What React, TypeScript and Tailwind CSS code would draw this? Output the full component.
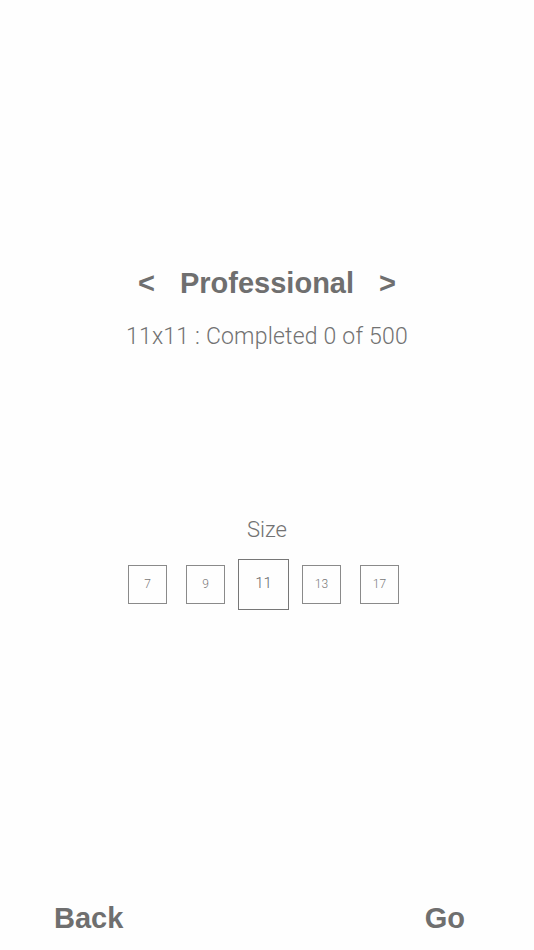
const sizes = [7, 9, 11, 13, 17];

const App = () => {
   const current = 11;

   return (
      <div className="flex h-[950px] w-full flex-col bg-[#fefefe] text-[#6f6f6f]" style={{ fontFamily: '"Liberation Sans", Arial, sans-serif' }}>
         {/* Level selector */}
         <div className="mt-[266px] flex items-center justify-center gap-[25px] text-[29px] font-bold leading-[34px]">
            <span>&lt;</span>
            <span>Professional</span>
            <span>&gt;</span>
         </div>
         <p className="mt-[23px] text-center text-[23px] font-light leading-[28px] tracking-[0.2px] text-[#727272]" style={{ fontFamily: 'Roboto, sans-serif' }}>
            11x11 : Completed 0 of 500
         </p>

         {/* Size picker */}
         <p className="mt-[165px] text-center text-[22px] font-light leading-[28px] text-[#727272]" style={{ fontFamily: 'Roboto, sans-serif' }}>
            Size
         </p>
         <div className="mt-[15px] flex items-center justify-center pr-[7px]" style={{ fontFamily: 'Roboto, sans-serif' }}>
            {sizes.map((s) => (
               <div key={s} className="flex w-[58px] justify-center">
                  {s === current ? (
                     <div className="flex h-[51px] w-[51px] items-center justify-center border-[1.5px] border-[#777] pb-[3px] text-[15px] font-light text-[#666]">
                        {s}
                     </div>
                  ) : (
                     <div className="flex h-[39px] w-[39px] items-center justify-center border border-[#8a8a8a] pb-[2px] text-[12px] font-light text-[#777]">
                        {s}
                     </div>
                  )}
               </div>
            ))}
         </div>

         {/* Footer */}
         <div className="mt-auto flex items-center justify-between pb-[15px] pl-[54px] pr-[69px] text-[29px] font-bold leading-[34px]">
            <span>Back</span>
            <span>Go</span>
         </div>
      </div>
   );
};

export default App;
